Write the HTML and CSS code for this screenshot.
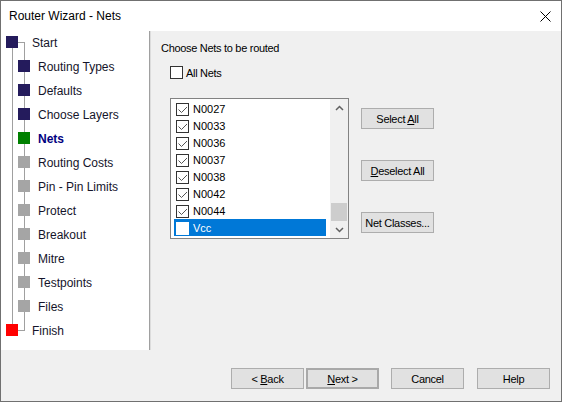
FILE: index.html
```html
<!DOCTYPE html>
<html>
<head>
<meta charset="utf-8">
<link rel="stylesheet" href="styles.css">
</head>
<body>
<div class="window">
  <div class="titlebar">
    <span class="title">Router Wizard - Nets</span>
    <svg class="close" width="11" height="11" viewBox="0 0 11 11"><path d="M0.5 0.5 L10.5 10.5 M10.5 0.5 L0.5 10.5" stroke="#000" stroke-width="1" fill="none"/></svg>
  </div>
  <div class="main">
    <div class="panel">
      <div class="tree">
        <div class="ln v1"></div>
        <div class="ln v2"></div>
        <div class="ln h1"></div>
        <div class="ln h2"></div>
        <div class="row root"><span class="sq navy"></span><span class="lbl">Start</span></div>
        <div class="row child"><span class="sq navy"></span><span class="lbl">Routing Types</span></div>
        <div class="row child"><span class="sq navy"></span><span class="lbl">Defaults</span></div>
        <div class="row child"><span class="sq navy"></span><span class="lbl">Choose Layers</span></div>
        <div class="row child"><span class="sq green"></span><span class="lbl cur">Nets</span></div>
        <div class="row child"><span class="sq gray"></span><span class="lbl">Routing Costs</span></div>
        <div class="row child"><span class="sq gray"></span><span class="lbl">Pin - Pin Limits</span></div>
        <div class="row child"><span class="sq gray"></span><span class="lbl">Protect</span></div>
        <div class="row child"><span class="sq gray"></span><span class="lbl">Breakout</span></div>
        <div class="row child"><span class="sq gray"></span><span class="lbl">Mitre</span></div>
        <div class="row child"><span class="sq gray"></span><span class="lbl">Testpoints</span></div>
        <div class="row child"><span class="sq gray"></span><span class="lbl">Files</span></div>
        <div class="row root"><span class="sq red"></span><span class="lbl">Finish</span></div>
      </div>
    </div>
    <div class="content">
      <div class="heading">Choose Nets to be routed</div>
      <div class="allnets"><span class="cb"></span><span class="cbl">All Nets</span></div>
      <div class="listarea">
        <div class="listbox">
          <div class="items">
            <div class="item"><span class="cb"><svg width="11" height="11" viewBox="0 0 11 11"><path d="M1.5 5.5 L4.5 8.5 L10 3" stroke="#555" stroke-width="1" fill="none"/></svg></span><span>N0027</span></div>
            <div class="item"><span class="cb"><svg width="11" height="11" viewBox="0 0 11 11"><path d="M1.5 5.5 L4.5 8.5 L10 3" stroke="#555" stroke-width="1" fill="none"/></svg></span><span>N0033</span></div>
            <div class="item"><span class="cb"><svg width="11" height="11" viewBox="0 0 11 11"><path d="M1.5 5.5 L4.5 8.5 L10 3" stroke="#555" stroke-width="1" fill="none"/></svg></span><span>N0036</span></div>
            <div class="item"><span class="cb"><svg width="11" height="11" viewBox="0 0 11 11"><path d="M1.5 5.5 L4.5 8.5 L10 3" stroke="#555" stroke-width="1" fill="none"/></svg></span><span>N0037</span></div>
            <div class="item"><span class="cb"><svg width="11" height="11" viewBox="0 0 11 11"><path d="M1.5 5.5 L4.5 8.5 L10 3" stroke="#555" stroke-width="1" fill="none"/></svg></span><span>N0038</span></div>
            <div class="item"><span class="cb"><svg width="11" height="11" viewBox="0 0 11 11"><path d="M1.5 5.5 L4.5 8.5 L10 3" stroke="#555" stroke-width="1" fill="none"/></svg></span><span>N0042</span></div>
            <div class="item"><span class="cb"><svg width="11" height="11" viewBox="0 0 11 11"><path d="M1.5 5.5 L4.5 8.5 L10 3" stroke="#555" stroke-width="1" fill="none"/></svg></span><span>N0044</span></div>
            <div class="item sel"><span class="cb white"></span><span>Vcc</span></div>
          </div>
          <div class="scrollbar">
            <div class="arrow"><svg width="9" height="6" viewBox="0 0 9 6"><path d="M1 5 L4.5 1.5 L8 5" stroke="#606060" stroke-width="1.5" fill="none"/></svg></div>
            <div class="track"><div class="thumb"></div></div>
            <div class="arrow"><svg width="9" height="6" viewBox="0 0 9 6"><path d="M1 1 L4.5 4.5 L8 1" stroke="#606060" stroke-width="1.5" fill="none"/></svg></div>
          </div>
        </div>
        <div class="sidebtns">
          <div class="btn"><span>Select <u>A</u>ll</span></div>
          <div class="btn"><span><u>D</u>eselect All</span></div>
          <div class="btn"><span>Net Classes...</span></div>
        </div>
      </div>
    </div>
  </div>
  <div class="footer">
    <div class="btn"><span>&lt; <u>B</u>ack</span></div>
    <div class="btn default"><span><u>N</u>ext &gt;</span></div>
    <div class="btn gapl"><span>Cancel</span></div>
    <div class="btn gapl2"><span>Help</span></div>
  </div>
</div>
</body>
</html>
```

FILE: styles.css
```css
html, body {
  margin: 0;
  padding: 0;
  background: #f0f0f0;
}
.window {
  width: 560px;
  height: 400px;
  border: 1px solid #707070;
  background: #f0f0f0;
  font-family: "Liberation Sans", Arial, sans-serif;
  color: #000;
  display: flex;
  flex-direction: column;
  overflow: hidden;
}
.titlebar {
  height: 30px;
  background: #fff;
  display: flex;
  align-items: center;
  padding-left: 8px;
  padding-right: 10px;
  flex: none;
}
.title {
  font-size: 12px;
  flex: 1;
}
.close {
  display: block;
  margin-top: 1px;
}
.main {
  height: 319px;
  display: flex;
  flex: none;
}
.panel {
  width: 148px;
  background: #fff;
  border-right: 1px solid #a0a0a0;
  box-shadow: 1px 0 0 #dcdcdc;
  flex: none;
}
.tree {
  position: relative;
  margin-top: -1px;
}
.ln {
  position: absolute;
  background: #a0a0a0;
}
.v1 { left: 11px; top: 18px; width: 1px; height: 276px; }
.v2 { left: 23px; top: 12px; width: 1px; height: 289px; }
.h1 { left: 17px; top: 12px; width: 7px; height: 1px; }
.h2 { left: 17px; top: 300px; width: 7px; height: 1px; }
.row {
  height: 24px;
  display: flex;
  align-items: center;
  font-size: 12px;
  position: relative;
}
.root { padding-left: 5px; }
.root .lbl { margin-left: 14px; }
.child { padding-left: 17px; }
.child .lbl { margin-left: 8px; }
.sq {
  width: 12px;
  height: 12px;
  display: block;
  flex: none;
}
.navy { background: #241b5c; }
.green { background: #008000; }
.gray { background: #a5a5a5; }
.red { background: #ff0000; }
.lbl {
  color: #14142a;
  position: relative;
  top: 1px;
}
.lbl.cur { font-weight: bold; color: #000080; }
.content {
  flex: 1;
  padding-left: 11px;
  display: flex;
  flex-direction: column;
  font-size: 11px;
  letter-spacing: -0.3px;
}
.heading {
  margin-top: 10px;
  line-height: 14px;
}
.allnets {
  margin-top: 11px;
  margin-left: 9px;
  display: flex;
  align-items: center;
  height: 13px;
}
.cb {
  width: 11px;
  height: 11px;
  border: 1px solid #333;
  background: #fff;
  display: block;
  flex: none;
}
.cb svg { display: block; }
.cbl { margin-left: 3px; }
.listarea {
  margin-top: 19px;
  margin-left: 9px;
  display: flex;
  align-items: flex-start;
}
.listbox {
  width: 177px;
  height: 139px;
  border: 1px solid #828282;
  background: #fff;
  display: flex;
  flex: none;
}
.items {
  width: 152px;
  padding: 1px 0 0 3px;
  letter-spacing: 0;
}
.item {
  height: 17px;
  display: flex;
  align-items: center;
  padding-left: 2px;
  font-size: 11px;
}
.item .cb { margin-right: 4px; margin-top: 1px; }
.item.sel {
  background: #0078d7;
  color: #fff;
}
.cb.white { border-color: #fff; }
.scrollbar {
  margin-left: 4px;
  width: 18px;
  background: #f0f0f0;
  display: flex;
  flex-direction: column;
}
.arrow {
  height: 17px;
  display: flex;
  align-items: center;
  justify-content: center;
  flex: none;
}
.arrow svg { display: block; }
.track {
  flex: 1;
  display: flex;
  flex-direction: column;
  justify-content: flex-end;
}
.thumb {
  height: 18px;
  margin: 0 1px;
  background: #cdcdcd;
}
.sidebtns {
  margin-left: 12px;
  margin-top: 10px;
  display: flex;
  flex-direction: column;
  gap: 31px;
}
.btn {
  width: 71px;
  height: 19px;
  border: 1px solid #adadad;
  background: #e1e1e1;
  font-size: 11px;
  letter-spacing: -0.3px;
  display: flex;
  align-items: center;
  justify-content: center;
  flex: none;
}
.footer {
  flex: 1;
  display: flex;
  padding-top: 18px;
  padding-left: 230px;
  align-items: flex-start;
}
.footer .default {
  margin-left: 2px;
  border: 2px solid #a9a9a9;
  width: 69px;
  height: 17px;
}
.gapl { margin-left: 12px; }
.gapl2 { margin-left: 13px; }
```
